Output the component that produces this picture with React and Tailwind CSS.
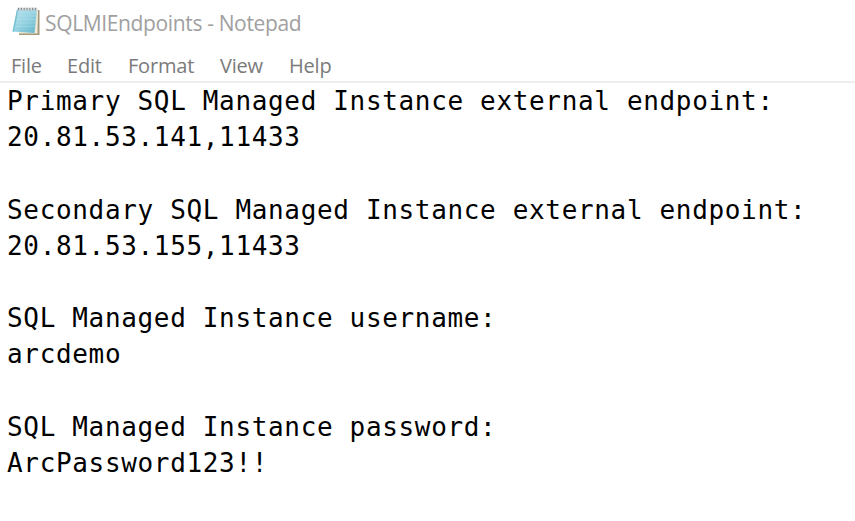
const LINES = [
  "Primary SQL Managed Instance external endpoint:",
  "20.81.53.141,11433",
  "",
  "Secondary SQL Managed Instance external endpoint:",
  "20.81.53.155,11433",
  "",
  "SQL Managed Instance username:",
  "arcdemo",
  "",
  "SQL Managed Instance password:",
  "ArcPassword123!!",
];

function NotepadIcon() {
  return (
    <svg className="h-[30px] w-[30px] shrink-0" viewBox="0 0 30 30">
      <defs>
        <linearGradient id="cover" x1="0" y1="0" x2="1" y2="1">
          <stop offset="0" stopColor="#b9e3ee" />
          <stop offset="0.5" stopColor="#96d3e2" />
          <stop offset="1" stopColor="#62b4ca" />
        </linearGradient>
      </defs>
      <path d="M7 5 L27.5 4 L27.5 29 L7 29 Z" fill="#a3977c" />
      <path d="M7 4 L26 3.5 L25.5 27.5 L7 27.5 Z" fill="#efe9d6" />
      <path d="M5 3.5 L25 3.5 L22.5 27 L0.5 25.5 Z" fill="url(#cover)" />
      <path d="M5 3.5 L0.5 25.5 L2 25.7 L6.5 3.5 Z" fill="#75bfd2" />
      <path d="M5 6.5 L25 6.5 M4.5 10 L24.5 10 M4 13.5 L24 13.5 M3 17 L23.7 17 M2.5 20.5 L23.3 20.5" stroke="#c5e8ef" strokeWidth="0.6" opacity="0.5" />
      <path d="M5.5 3 L25.5 3" stroke="#dcdedf" strokeWidth="2.6" />
      <path d="M6 3 L25.5 3" stroke="#858c90" strokeWidth="2.6" strokeDasharray="1.2 1.6" />
    </svg>
  );
}

export default function App() {
  return (
    <div className="flex h-[521px] w-[855px] flex-col overflow-hidden bg-white">
      <header className="flex h-[45px] items-start pl-[12px] pt-[6px] font-['Open_Sans',sans-serif]">
        <NotepadIcon />
        <h1 className="ml-[3px] mt-[2px] whitespace-pre text-[21px] leading-[30px] tracking-[-0.36px] text-[#a0a0a0]">SQLMIEndpoints - Notepad</h1>
      </header>
      <nav className="flex h-[36px] pl-[11px] font-['Open_Sans',sans-serif] text-[20px] leading-[42px] tracking-[-0.2px] text-[#7a7a7a]">
        <span className="w-[56px]">File</span>
        <span className="w-[61px]">Edit</span>
        <span className="w-[92px]">Format</span>
        <span className="w-[69px]">View</span>
        <span>Help</span>
      </nav>
      <main className="border-t-2 border-[#eeeeee] pl-[7px] font-['DejaVu_Sans_Mono',monospace] text-[26px] leading-[36.18px] tracking-[0.66px] text-black">
        {LINES.map((line, i) => (
          <div key={i} className="h-[36.18px] whitespace-pre">{line}</div>
        ))}
      </main>
    </div>
  );
}
